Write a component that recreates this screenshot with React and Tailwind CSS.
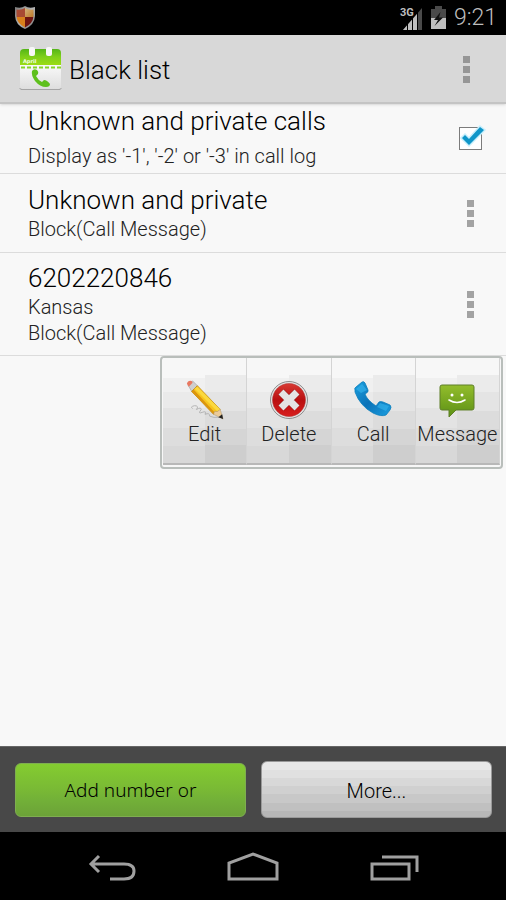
import React from 'react';

const ShieldIcon = () => (
  <svg viewBox="0 0 22 25" className="h-[25px] w-[22px]" aria-hidden="true">
    <defs>
      <clipPath id="shield">
        <path d="M11 3 Q7 5.500 2.500 4.500 V11 Q3 18.500 11 22.500 Q19 18.500 19.500 11 V4.500 Q15 5.500 11 3Z" />
      </clipPath>
      <linearGradient id="rim" x1="0" y1="0" x2="1" y2="1">
        <stop offset="0" stopColor="#777" />
        <stop offset="0.500" stopColor="#b4b4b4" />
        <stop offset="1" stopColor="#777" />
      </linearGradient>
      <linearGradient id="gold" x1="0" y1="0" x2="1" y2="1">
        <stop offset="0" stopColor="#dcbf8a" />
        <stop offset="1" stopColor="#b96f1c" />
      </linearGradient>
    </defs>
    <path d="M11 1 Q7 4 1 2 V11 Q1.500 20 11 24 Q20.500 20 21 11 V2 Q15 4 11 1Z" fill="url(#rim)" />
    <g clipPath="url(#shield)">
      <path d="M0 0H11V12H0Z" fill="#a94a33" />
      <path d="M11 0H22V12H11Z" fill="url(#gold)" />
      <path d="M0 12H11V25H0Z" fill="#d9801c" />
      <path d="M11 12H22V25H11Z" fill="#701511" />
    </g>
  </svg>
);

const SignalIcon = () => (
  <svg viewBox="0 0 24 24" className="h-6 w-6" aria-hidden="true">
    <path d="M4 24 L23 2 V24Z" fill="#4a4a4a" />
    <path d="M4 24 L18 8 V24Z" fill="#bebebe" />
    <path d="M8.500 15V24M13.500 10V24M18.500 5V24" stroke="#000" strokeWidth="1" />
    <text x="1" y="10" className="font-[Roboto] text-[11px] font-bold" fill="#bebebe" stroke="#000" strokeWidth="2" paintOrder="stroke">3G</text>
  </svg>
);

const BatteryIcon = () => (
  <svg viewBox="0 0 15 23" className="h-[23px] w-[15px]" aria-hidden="true">
    <path d="M4 0H11V3H15V12H0V3H4Z" fill="#4a4a4a" />
    <path d="M0 12H15V23H0Z" fill="#bebebe" />
    <path d="M9.500 6 L3 14 H7 L3.500 20 L12 11.500 H8Z" fill="#111" />
  </svg>
);

const CalendarIcon = () => (
  <svg viewBox="0 0 44 44" className="h-11 w-11" aria-hidden="true">
    <defs>
      <linearGradient id="page" x1="0" y1="0" x2="0" y2="1">
        <stop offset="0" stopColor="#fafafa" />
        <stop offset="1" stopColor="#dedede" />
      </linearGradient>
      <linearGradient id="band" x1="0" y1="0" x2="0" y2="1">
        <stop offset="0" stopColor="#54b518" />
        <stop offset="0.500" stopColor="#7fd01a" />
        <stop offset="1" stopColor="#9bdc14" />
      </linearGradient>
    </defs>
    <path d="M0 41 L2 43 H41 L43 41Z" fill="#a5a5a5" />
    <path d="M1 17H42V40Q42 42 40 42H3Q1 42 1 40Z" fill="url(#page)" />
    <path d="M1 18V6Q1 2 5 2H38Q42 2 42 6V18Z" fill="url(#band)" />
    <path d="M2 20.500H42" stroke="#86d425" strokeWidth="2" strokeDasharray="4 2" />
    <rect x="10" y="0" width="6" height="9" rx="2" fill="#f7f7f7" />
    <rect x="27" y="0" width="6" height="9" rx="2" fill="#f7f7f7" />
    <text x="4" y="16" className="font-['DejaVu_Sans'] text-[5px] font-bold" fill="#f4ffe8">April</text>
    <path d="M13 24 Q15 21 18 23 Q20 25 19 27 L17 29 Q19 33 23 35 L25 33 Q28 33 31 37 Q31 40 27 40 Q21 40 16 34 Q12 28 13 24Z" fill="#5fc01d" />
  </svg>
);

const PencilIcon = () => (
  <svg viewBox="0 0 42 42" className="h-10 w-10" aria-hidden="true">
    <path d="M8 30 Q5 28 10 27 Q15 27 12 31 Q17 28 17 31 Q13 36 18 34 Q23 32 21 36 Q26 34 26 38 Q30 40 36 39" fill="none" stroke="#b0b0b0" strokeWidth="1" />
    <path d="M3 5 L8 1 L13 6 L7 12Z" fill="#cfcfcf" stroke="#888" strokeWidth="0.500" />
    <path d="M2 4 Q3 0 7 1 L8 3 L4 7Z" fill="#e97861" />
    <path d="M7 12 L13 6 L37 31 L30 36Z" fill="#f7c51d" stroke="#b97f0b" strokeWidth="0.800" />
    <path d="M10 9 L13 7 L37 31 L34 33Z" fill="#fbd93f" />
    <path d="M7 12 L9 10 L32 35 L30 36Z" fill="#dc960e" />
    <path d="M30 36 L31 33 L34 33 L37 31 L40 41Z" fill="#eccb98" stroke="#a8906b" strokeWidth="0.500" />
    <path d="M35 39 L39 36 L40 41Z" fill="#222" />
  </svg>
);

const DeleteIcon = () => (
  <svg viewBox="0 0 40 40" className="h-10 w-10" aria-hidden="true">
    <defs>
      <linearGradient id="red" x1="0" y1="0" x2="0" y2="1">
        <stop offset="0" stopColor="#d83a34" />
        <stop offset="0.500" stopColor="#b90f10" />
        <stop offset="1" stopColor="#d81e1e" />
      </linearGradient>
    </defs>
    <circle cx="20" cy="20" r="18.500" fill="#e4e4e4" stroke="#8d8d8d" strokeWidth="1" />
    <circle cx="20" cy="20" r="16.500" fill="url(#red)" stroke="#a33" strokeWidth="0.500" />
    <path d="M12 12 L28 28 M28 12 L12 28" stroke="#8d1010" strokeWidth="8" />
    <path d="M12 12 L28 28 M28 12 L12 28" stroke="#e4e4e4" strokeWidth="7" />
  </svg>
);

const CallIcon = () => (
  <svg viewBox="0 0 40 40" className="h-10 w-10" aria-hidden="true">
    <defs>
      <linearGradient id="blue" x1="0" y1="0" x2="1" y2="1">
        <stop offset="0" stopColor="#1ba0df" />
        <stop offset="0.500" stopColor="#0a72b8" />
        <stop offset="1" stopColor="#1b9ee0" />
      </linearGradient>
    </defs>
    <path d="M2 10 Q1 8 3 7 L9 2 Q11 1 12 3 L15 10 Q16 12 12 14 Q14 20 23 26 L26 22 Q27 21 30 22 L37 25 Q39 27 37 30 L33 35 Q28 37 20 33 Q7 26 2 12Z" fill="url(#blue)" stroke="#0b7fbd" strokeWidth="0.800" />
    <path d="M3 9 L9 4 L14 10 L8 13Z M24 27 L27 23 L36 26 L33 31Z" fill="#35b5ee" opacity="0.600" />
  </svg>
);

const MessageIcon = () => (
  <svg viewBox="0 0 40 40" className="h-10 w-10" aria-hidden="true">
    <defs>
      <linearGradient id="green" x1="0" y1="0" x2="0" y2="1">
        <stop offset="0" stopColor="#93bd2c" />
        <stop offset="1" stopColor="#5c9015" />
      </linearGradient>
    </defs>
    <path d="M5 5H35Q37 5 37 7V28Q37 30 35 30H19L12 37V30H5Q3 30 3 28V7Q3 5 5 5Z" fill="url(#green)" stroke="#5f7f28" strokeWidth="1" />
    <circle cx="15" cy="15" r="1.500" fill="#fff" />
    <circle cx="25" cy="15" r="1.500" fill="#fff" />
    <path d="M12 20 Q20 25 28 20" fill="none" stroke="#fff" strokeWidth="1.600" strokeLinecap="round" />
  </svg>
);

const DotsButton = ({ label, dark }) => (
  <button type="button" aria-label={label} className="flex w-8 shrink-0 flex-col items-center gap-[3px] py-2">
    {[0, 1, 2].map((dot) => (
      <span key={dot} className={dark ? 'size-[7px] bg-[#969696]' : 'size-[7px] bg-[#a3a3a3]'} />
    ))}
  </button>
);

const actions = [
  { label: 'Edit', icon: PencilIcon },
  { label: 'Delete', icon: DeleteIcon },
  { label: 'Call', icon: CallIcon },
  { label: 'Message', icon: MessageIcon }
];

const App = () => {
  return (
    <div className="flex min-h-screen flex-col bg-[#f8f8f8] font-[Roboto,'Noto_Sans',sans-serif] font-[350] text-black">
      <div className="flex h-[35px] items-center bg-black pr-[9px] pl-[14px] text-[#bebebe]">
        <ShieldIcon />
        <div className="ml-auto flex items-center gap-2">
          <SignalIcon />
          <BatteryIcon />
          <span className="text-[23px] leading-8">9:21</span>
        </div>
      </div>

      <header className="flex h-[69px] items-center border-b-2 border-[#c4c4c4] bg-[#d8d8d8] pt-px pr-6 pl-[19px] shadow-sm">
        <CalendarIcon />
        <h1 className="ml-[6px] flex-1 pt-px text-[26px] leading-8">Black list</h1>
        <DotsButton label="More options" dark />
      </header>

      <main className="flex-1">
        <div className="flex h-[70px] items-center border-b border-[#dcdcdc] pr-5 pl-7">
          <label htmlFor="unknown" className="flex-1 pb-px">
            <span className="block text-[26px] leading-8">Unknown and private calls</span>
            <span className="block pt-[3px] text-[20px] leading-8 text-[#222]">Display as '-1', '-2' or '-3' in call log</span>
          </label>
          <span className="relative flex h-8 w-8 items-center justify-center">
            <input
              id="unknown"
              type="checkbox"
              defaultChecked
              className="peer size-[23px] appearance-none border border-[#7c7c7c] bg-white"
            />
            <svg viewBox="0 0 32 32" className="pointer-events-none absolute inset-0 hidden size-8 peer-checked:block" aria-hidden="true">
              <path d="M8 15 L11 12 L15 16 L26 4 L30 7 L15 22Z" fill="none" stroke="#c8effc" strokeWidth="3" />
              <path d="M8 15 L11 12 L15 16 L26 4 L30 7 L15 22Z" fill="#0f96c9" />
            </svg>
          </span>
        </div>

        <div className="flex items-center border-b border-[#dcdcdc] py-[10px] pr-5 pl-7">
          <div className="flex-1">
            <h2 className="text-[26px] leading-8">Unknown and private</h2>
            <p className="text-[20px] leading-[26px] text-[#222]">Block(Call Message)</p>
          </div>
          <DotsButton label="Options for unknown and private" />
        </div>

        <div className="flex items-center border-b border-[#dcdcdc] py-[9px] pr-5 pl-7">
          <div className="flex-1">
            <h2 className="text-[26px] leading-8">6202220846</h2>
            <p className="text-[20px] leading-[26px] text-[#222]">Kansas</p>
            <p className="text-[20px] leading-[26px] text-[#222]">Block(Call Message)</p>
          </div>
          <DotsButton label="Options for 6202220846" />
        </div>

        <div className="mr-[3px] ml-auto grid h-[113px] w-[343px] max-w-full grid-cols-4 rounded-[4px] border-2 border-[#b9bebb] bg-[#f7f7f7] px-px pb-[2px]">
          {actions.map((action) => {
            const Icon = action.icon;
            return (
              <button
                key={action.label}
                type="button"
                className="relative flex flex-col items-center border-r border-b-2 border-r-[#d4d4d4] border-b-[#b8b8b8] bg-[linear-gradient(#f7f7f7_20px,#f0f0f0_20px,#f0f0f0_34px,#eaeaea_34px,#eaeaea_50px,#e3e3e3_50px,#e3e3e3_70px,#dddddd_70px,#dddddd_88px,#d8d8d8_88px)] pt-[22px] text-[20px] leading-7"
              >
                <span className="absolute right-0 bottom-0 h-[88px] w-1/2 bg-[linear-gradient(#ebebeb_17px,#e4e4e4_17px,#e4e4e4_36px,#dcdcdc_36px,#dcdcdc_54px,#d5d5d5_54px,#d5d5d5_70px,#cecece_70px)]" />
                <span className="relative"><Icon /></span>
                <span className="relative text-[#222]">{action.label}</span>
              </button>
            );
          })}
        </div>
      </main>

      <footer className="flex h-[86px] items-center gap-[15px] border-t border-[#666] bg-[#484848] pr-[14px] pl-[15px]">
        <button
          type="button"
          className="h-[54px] flex-1 rounded-[6px] border border-[#7fae50] bg-[linear-gradient(#84cc30,#79b935_50%,#72b038_70%,#6ca238)] pt-[2px] font-['Noto_Sans',sans-serif] text-[19px]"
        >
          Add number or
        </button>
        <button
          type="button"
          className="h-[57px] flex-1 rounded-[6px] border border-[#999] bg-[linear-gradient(#e8e8e8_8px,#e0e0e0_8px,#e0e0e0_16px,#d8d8d8_16px,#d8d8d8_24px,#d0d0d0_24px,#d0d0d0_32px,#c8c8c8_32px,#c8c8c8_41px,#c0c0c0_41px,#c0c0c0_49px,#b7b7b7_49px)] pt-[2px] text-[20px]"
        >
          More...
        </button>
      </footer>

      <nav className="flex h-[68px] items-center justify-center gap-[88px] bg-black pt-1 pl-[2px]">
        <button type="button" aria-label="Back">
          <svg viewBox="0 0 54 32" className="h-8 w-[54px]" fill="none" stroke="#a0a0a0" strokeWidth="3">
            <path d="M14 4 L6 12 L14 20 M6 12 H39 Q49 12 49 19 Q49 27 39 27 H25" />
          </svg>
        </button>
        <button type="button" aria-label="Home">
          <svg viewBox="0 0 54 32" className="h-8 w-[54px]" fill="none" stroke="#a0a0a0" strokeWidth="3">
            <path d="M2 27 V11 L26 2 L50 11 V27Z" />
          </svg>
        </button>
        <button type="button" aria-label="Recent apps">
          <svg viewBox="0 0 54 32" className="h-8 w-[54px]" fill="none" stroke="#a0a0a0" strokeWidth="3">
            <path d="M3 12H40V27H3Z M13 5H48V20" />
          </svg>
        </button>
      </nav>
    </div>
  );
};

export default App;
